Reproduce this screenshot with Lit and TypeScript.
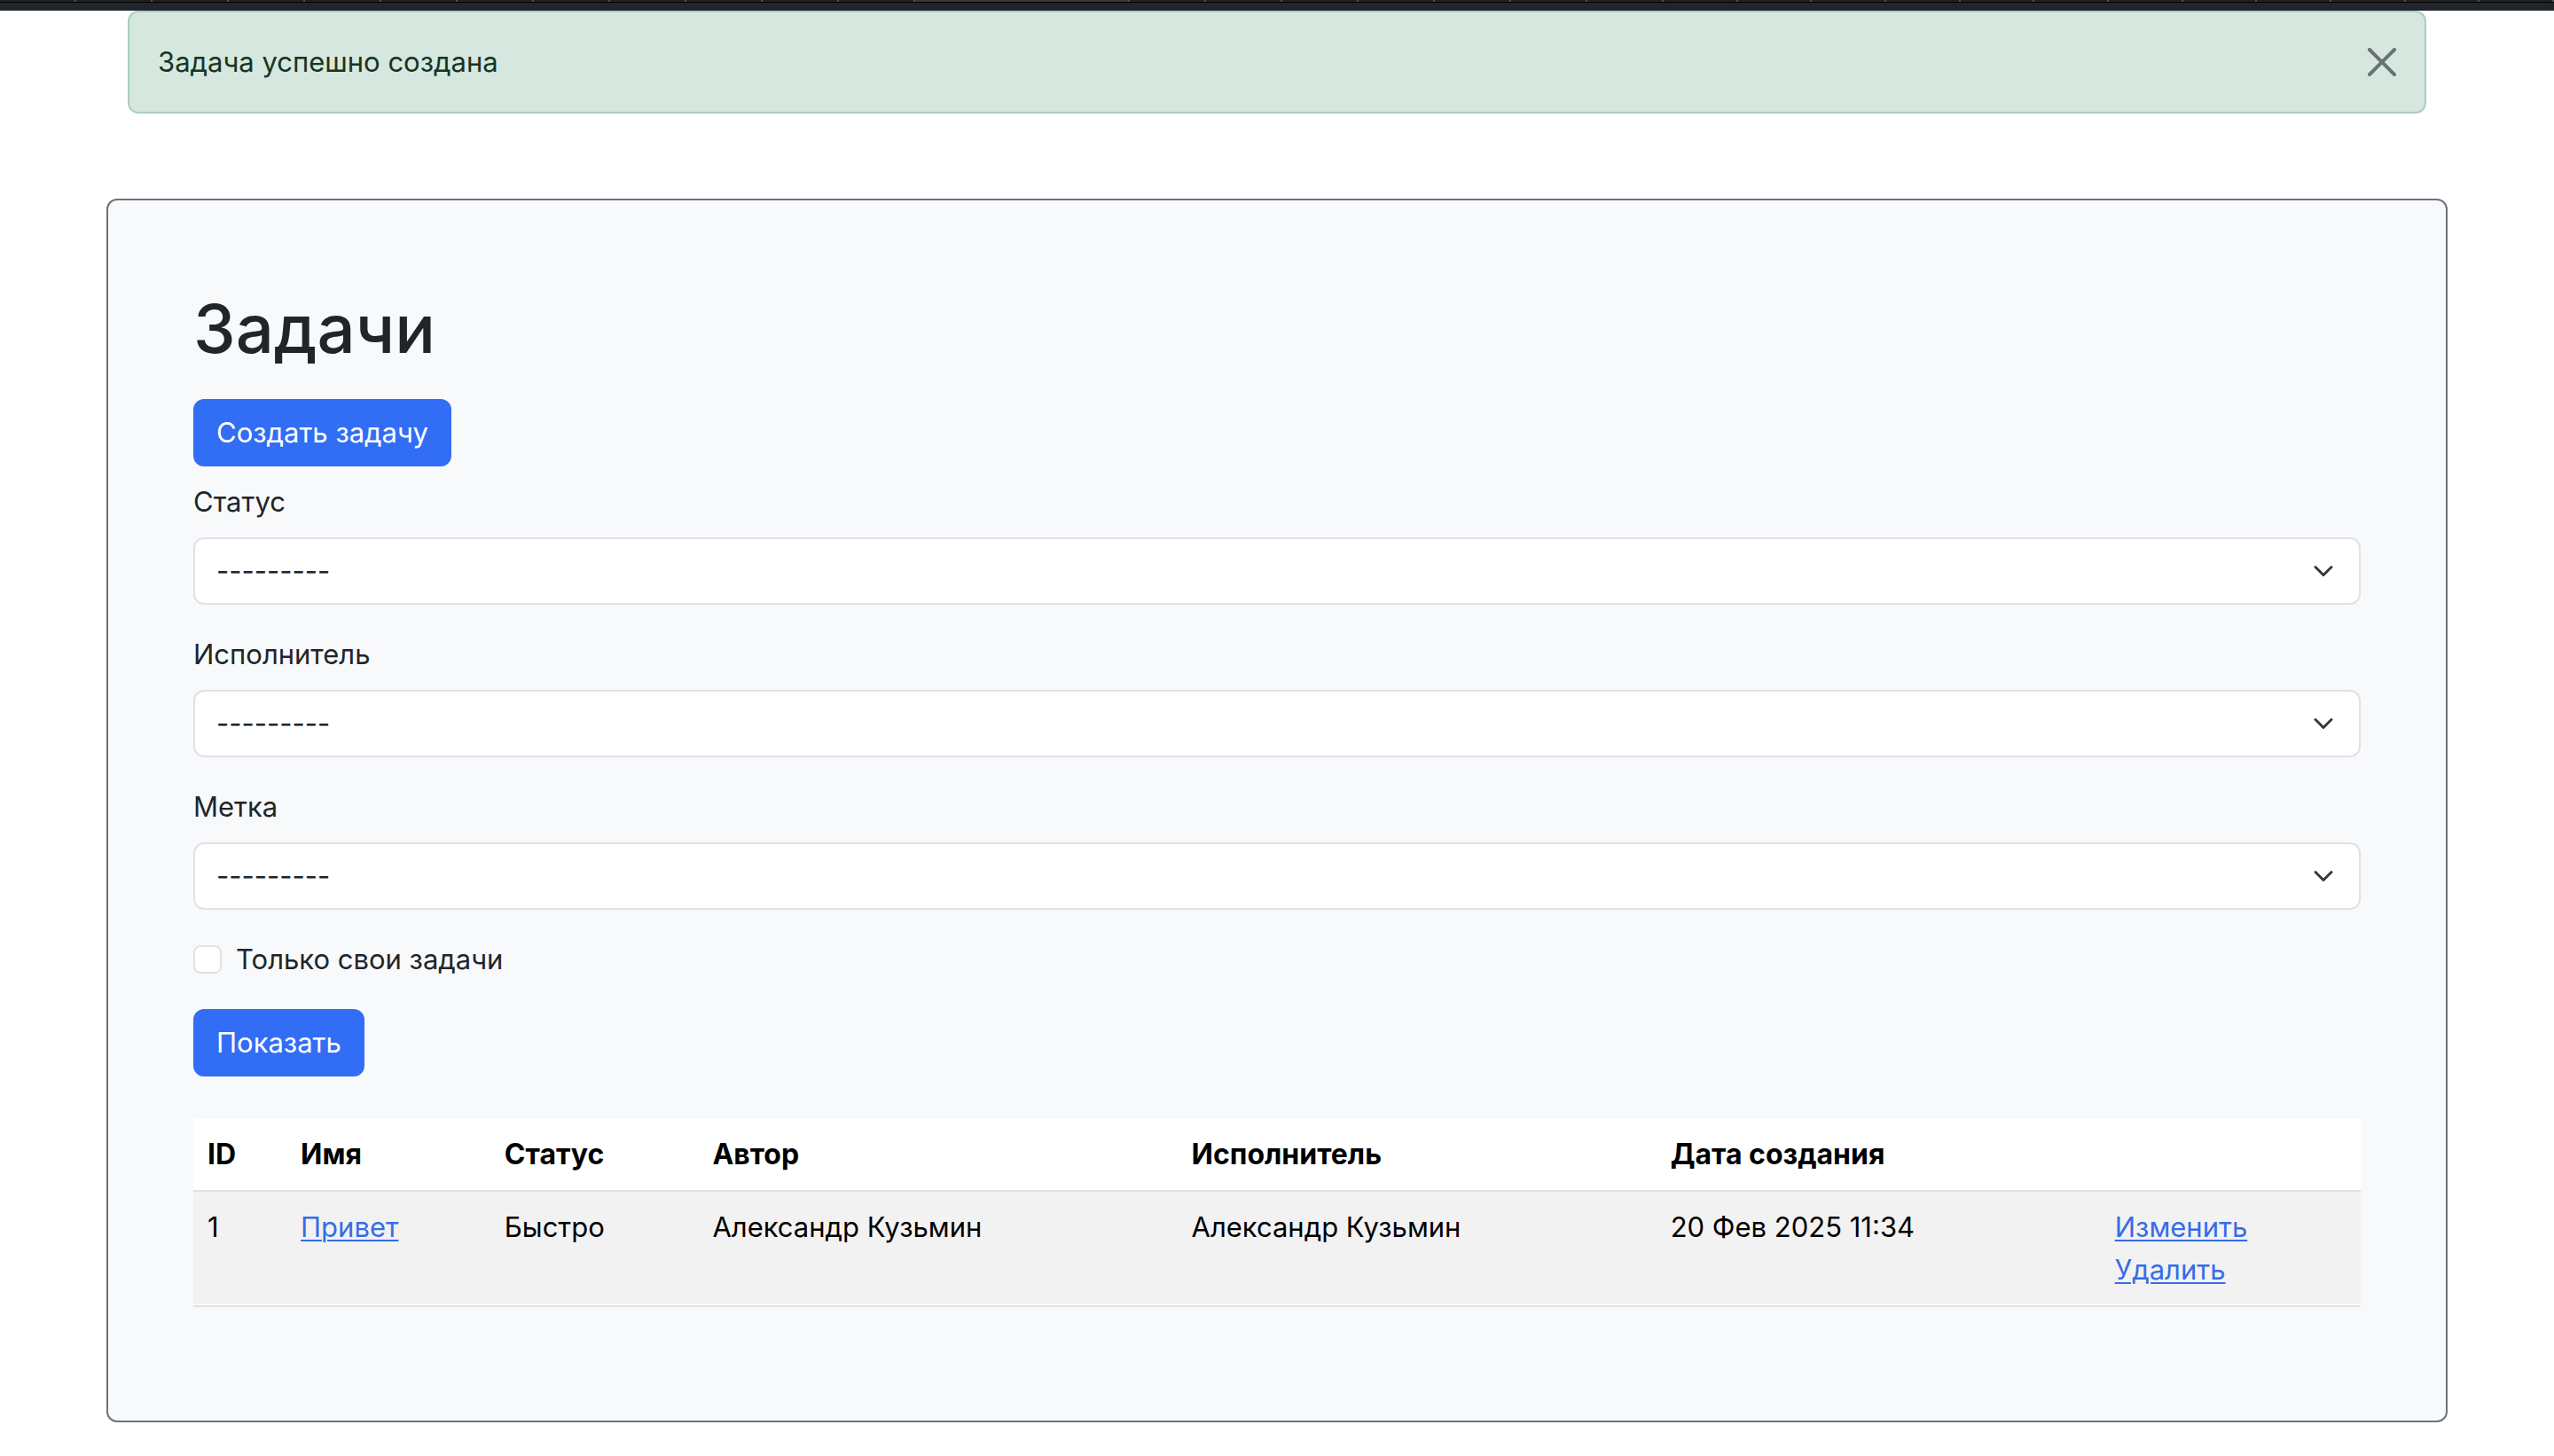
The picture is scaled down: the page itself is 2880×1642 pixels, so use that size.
import { LitElement, html, css } from "lit";
import { customElement, state } from "lit/decorators.js";

interface Task {
  id: number;
  name: string;
  status: string;
  author: string;
  executor: string;
  created: string;
}

const TASKS: Task[] = [
  {
    id: 1,
    name: "Привет",
    status: "Быстро",
    author: "Александр Кузьмин",
    executor: "Александр Кузьмин",
    created: "20 Фев 2025 11:34",
  },
];

const FILTERS = [
  { id: "status", label: "Статус" },
  { id: "executor", label: "Исполнитель" },
  { id: "label", label: "Метка" },
];

/** Thin strip of tabs along the top edge, over the dark bar. */
@customElement("tab-strip")
export class TabStrip extends LitElement {
  static styles = css`
    :host {
      display: block;
    }
    .tabs {
      display: grid;
      grid-template-columns: repeat(12, 258fr) 726fr repeat(7, 258fr) repeat(12, 251fr);
      height: 2px;
      background: #202121;
      border-bottom: 1px solid #000;
    }
    .tab {
      border-right: 2px solid #4f5050;
    }
    .tab.active {
      background: #3a3a3a;
    }
    .bar {
      height: 9px;
      background: #212529;
    }
  `;

  render() {
    return html`
      <div class="tabs">
        ${Array.from({ length: 32 }, (_, i) => html`<span class=${i === 12 ? "tab active" : "tab"}></span>`)}
      </div>
      <div class="bar"></div>
    `;
  }
}

@customElement("app-root")
export class AppRoot extends LitElement {
  @state() private alertOpen = true;

  static styles = css`
    :host {
      display: block;
      min-height: 100vh;
      background: #fff;
      color: #212529;
      font-family: Inter, "Noto Sans", sans-serif;
      font-size: 31px;
      line-height: 48px;
    }
    *,
    *::before {
      box-sizing: border-box;
    }
    .container {
      max-width: 2640px;
      margin: 0 auto;
    }
    .alert {
      display: flex;
      align-items: center;
      justify-content: space-between;
      margin: 0 24px 96px;
      padding: 32px;
      border: 2px solid #abcfbe;
      border-radius: 12px;
      background: #d5e7de;
      color: #173423;
    }
    .close {
      display: flex;
      padding: 0;
      border: 0;
      background: none;
      color: #000;
      opacity: 0.5;
      cursor: pointer;
    }
    .close svg {
      width: 32px;
      height: 32px;
    }
    .card {
      padding: 96px 96px 128px;
      border: 2px solid #6d737b;
      border-radius: 12px;
      background: #f8f9fb;
    }
    h1 {
      margin: 0 0 32px;
      font-size: 76px;
      font-weight: 500;
      line-height: 96px;
    }
    .btn {
      display: inline-flex;
      padding: 12px 24px;
      border: 2px solid #326df5;
      border-radius: 12px;
      background: #326df5;
      color: #fff;
      font: inherit;
      text-decoration: none;
      cursor: pointer;
    }
    .filters {
      display: flex;
      flex-direction: column;
      align-items: flex-start;
      gap: 32px;
      margin: 16px 0 48px;
    }
    .field {
      display: flex;
      flex-direction: column;
      gap: 16px;
      width: 100%;
    }
    .select {
      display: grid;
      align-items: center;
    }
    .select select,
    .select svg {
      grid-area: 1 / 1;
    }
    .select select {
      appearance: none;
      width: 100%;
      margin: 0;
      padding: 12px 72px 12px 24px;
      border: 2px solid #dfe2e6;
      border-radius: 12px;
      background: #fff;
      color: inherit;
      font: inherit;
    }
    .select svg {
      justify-self: end;
      width: 32px;
      height: 24px;
      margin-right: 26px;
      pointer-events: none;
    }
    .check {
      display: flex;
      align-items: center;
      gap: 16px;
    }
    .check input {
      appearance: none;
      width: 32px;
      height: 32px;
      margin: 0;
      border: 2px solid #dfe2e6;
      border-radius: 8px;
      background: #fff;
    }
    .check input:checked {
      border-color: #326df5;
      background: #326df5;
    }
    table {
      width: 100%;
      table-layout: fixed;
      border-spacing: 0;
      color: #000;
    }
    .c-id {
      width: 4.3%;
    }
    .c-name {
      width: 9.4%;
    }
    .c-status {
      width: 9.6%;
    }
    .c-person {
      width: 22.1%;
    }
    .c-date {
      width: 20.5%;
    }
    .c-actions {
      width: 12%;
    }
    th,
    td {
      padding: 16px;
      border-bottom: 2px solid #dfe2e6;
      background: #fff;
      text-align: left;
      vertical-align: top;
    }
    th {
      font-size: 32px;
      font-weight: 700;
    }
    tbody tr:nth-child(odd) td {
      background: #f2f2f2;
      box-shadow: inset 0 -1px #fff;
    }
    td a {
      color: #376ce8;
      text-decoration-thickness: 2px;
      text-underline-offset: 3px;
    }
  `;

  private renderAlert() {
    return html`
      <div class="alert" role="alert">
        <span>Задача успешно создана</span>
        <button class="close" type="button" aria-label="Закрыть" @click=${() => (this.alertOpen = false)}>
          <svg viewBox="0 0 16 16" fill="currentColor" aria-hidden="true">
            <path
              d="M.293.293a1 1 0 0 1 1.414 0L8 6.586 14.293.293a1 1 0 1 1 1.414 1.414L9.414 8l6.293 6.293a1 1 0 0 1-1.414 1.414L8 9.414l-6.293 6.293a1 1 0 0 1-1.414-1.414L6.586 8 .293 1.707a1 1 0 0 1 0-1.414z"
            />
          </svg>
        </button>
      </div>
    `;
  }

  private renderFilter(filter: { id: string; label: string }) {
    return html`
      <div class="field">
        <label for=${filter.id}>${filter.label}</label>
        <div class="select">
          <select id=${filter.id} name=${filter.id}>
            <option value="">---------</option>
          </select>
          <svg viewBox="0 0 16 16" fill="none" aria-hidden="true">
            <path d="m2 5 6 6 6-6" stroke="#343a40" stroke-width="2" stroke-linecap="round" stroke-linejoin="round" />
          </svg>
        </div>
      </div>
    `;
  }

  private renderTask(task: Task) {
    return html`
      <tr>
        <td>${task.id}</td>
        <td><a href="#task">${task.name}</a></td>
        <td>${task.status}</td>
        <td>${task.author}</td>
        <td>${task.executor}</td>
        <td>${task.created}</td>
        <td><a href="#update">Изменить</a><br /><a href="#delete">Удалить</a></td>
      </tr>
    `;
  }

  render() {
    return html`
      <tab-strip></tab-strip>
      <div class="container">
        ${this.alertOpen ? this.renderAlert() : null}
        <main class="card">
          <h1>Задачи</h1>
          <a class="btn" href="#create">Создать задачу</a>
          <form class="filters" @submit=${(e: Event) => e.preventDefault()}>
            ${FILTERS.map((f) => this.renderFilter(f))}
            <div class="check">
              <input type="checkbox" id="self-tasks" name="self-tasks" />
              <label for="self-tasks">Только свои задачи</label>
            </div>
            <button class="btn" type="submit">Показать</button>
          </form>
          <table>
            <colgroup>
              <col class="c-id" />
              <col class="c-name" />
              <col class="c-status" />
              <col class="c-person" />
              <col class="c-person" />
              <col class="c-date" />
              <col class="c-actions" />
            </colgroup>
            <thead>
              <tr>
                <th>ID</th>
                <th>Имя</th>
                <th>Статус</th>
                <th>Автор</th>
                <th>Исполнитель</th>
                <th>Дата создания</th>
                <th></th>
              </tr>
            </thead>
            <tbody>
              ${TASKS.map((t) => this.renderTask(t))}
            </tbody>
          </table>
        </main>
      </div>
    `;
  }
}
